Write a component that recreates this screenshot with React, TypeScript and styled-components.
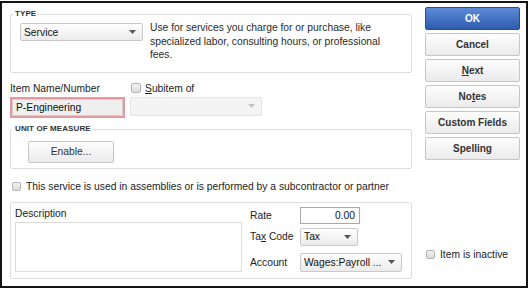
import React from "react";
import styled, { createGlobalStyle } from "styled-components";

const GlobalStyle = createGlobalStyle`
  html, body { margin: 0; padding: 0; background: #fff; }
  body {
    font-family: "Liberation Sans", Arial, sans-serif;
    font-size: 10.3px;
    color: #222;
  }
  * { box-sizing: border-box; }
`;

const Dialog = styled.div`
  width: 528px;
  height: 287px;
  margin: 1px 0 0 0;
  border: 2px solid #141414;
  background: #fff;
  display: flex;
  padding: 0 6px 0 8px;
`;

const LeftCol = styled.div`
  width: 402px;
  display: flex;
  flex-direction: column;
  padding-top: 11px;
`;

const RightCol = styled.div`
  width: 95px;
  margin-left: 13px;
  display: flex;
  flex-direction: column;
  gap: 3px;
  padding: 4px 0 25px;
`;

const Group = styled.div<{ $mt?: number }>`
  border: 1px solid #dedede;
  border-radius: 2px;
  margin-top: ${(p) => p.$mt ?? 0}px;
`;

const GroupTitle = styled.div`
  margin: -6px 0 0 2px;
  padding: 0 2px;
  width: fit-content;
  background: #fff;
  font-weight: bold;
  font-size: 8px;
  line-height: 10px;
  color: #333;
  letter-spacing: 0.1px;
`;

const TypeRow = styled.div`
  display: flex;
  align-items: flex-start;
  gap: 7px;
  padding: 4px 8px 10px 9px;
`;

const Desc = styled.div`
  width: 240px;
  line-height: 13.5px;
  margin-top: -2px;
  color: #2a2a2a;
`;

const SelectBox = styled.div<{ $w: number; $h?: number; $disabled?: boolean }>`
  width: ${(p) => p.$w}px;
  height: ${(p) => p.$h ?? 18}px;
  flex: none;
  display: flex;
  align-items: center;
  padding: 0 6px 0 3px;
  border: 1px solid ${(p) => (p.$disabled ? "#e4e4e4" : "#c9c9c9")};
  border-radius: 2px;
  background: ${(p) =>
    p.$disabled ? "#f4f4f4" : "linear-gradient(#fefefe, #ebebeb)"};
  color: #111;
`;

const SelectText = styled.span`
  flex: 1;
  white-space: nowrap;
  overflow: hidden;
`;

const Arrow = ({ light }: { light?: boolean }) => (
  <svg width="7" height="4" viewBox="0 0 7 4">
    <path d="M0 0 H7 L3.5 4 Z" fill={light ? "#c4c4c4" : "#555"} />
  </svg>
);

const Select = ({
  w,
  h,
  text,
  disabled,
}: {
  w: number;
  h?: number;
  text?: string;
  disabled?: boolean;
}) => (
  <SelectBox $w={w} $h={h} $disabled={disabled}>
    <SelectText>{text}</SelectText>
    <Arrow light={disabled} />
  </SelectBox>
);

const NameRow = styled.div`
  display: flex;
  gap: 5px;
  margin-top: 9px;
`;

const NameCol = styled.div<{ $w: number }>`
  width: ${(p) => p.$w}px;
  display: flex;
  flex-direction: column;
`;

const Label = styled.div`
  line-height: 13px;
  color: #222;
  white-space: nowrap;
`;

const CheckLabel = styled.label`
  display: flex;
  align-items: center;
  gap: 4px;
  height: 13px;
  line-height: 13px;
  padding-left: 1px;
  color: #222;
  white-space: nowrap;
`;

const Check = styled.span<{ $size?: number }>`
  width: ${(p) => p.$size ?? 10}px;
  height: ${(p) => p.$size ?? 10}px;
  flex: none;
  border: 1px solid #b4b4b4;
  border-radius: 2px;
  background: linear-gradient(#f2f2f2, #dcdcdc);
`;

const HighlightInput = styled.div`
  margin-top: 2px;
  height: 21px;
  width: 115px;
  border: 2px solid #e8979b;
`;

const InputInner = styled.div`
  height: 100%;
  border: 1px solid #cfcfcf;
  background: #efefef;
  padding-left: 3px;
  display: flex;
  align-items: center;
  color: #111;
`;

const SubSelectWrap = styled.div`
  margin-top: 2px;
`;

const UnitBody = styled.div`
  padding: 7px 0 5px 17px;
`;

const Btn = styled.div<{ $primary?: boolean; $w?: number }>`
  width: ${(p) => (p.$w ? `${p.$w}px` : "100%")};
  height: ${(p) => (p.$w ? 22 : 23)}px;
  display: flex;
  align-items: center;
  justify-content: center;
  border: 1px solid ${(p) => (p.$primary ? "#2a4c8c" : "#c6c6c6")};
  border-radius: 2px;
  background: ${(p) =>
    p.$primary
      ? "linear-gradient(#5b8bd8, #2f5cad)"
      : "linear-gradient(#fdfdfd, #ebebeb)"};
  color: ${(p) => (p.$primary ? "#fff" : "#333")};
  font-weight: ${(p) => (p.$w ? "normal" : "bold")};
  font-size: ${(p) => (p.$w ? 10.3 : 10)}px;
`;

const U = styled.span`
  text-decoration: underline;
`;

const AssemblyRow = styled.label`
  display: flex;
  align-items: center;
  gap: 5px;
  margin-top: 11px;
  padding-left: 2px;
  height: 14px;
  color: #222;
  white-space: nowrap;
`;

const BottomBody = styled.div`
  display: flex;
  padding: 4px 0 6px 4px;
`;

const DescCol = styled.div`
  display: flex;
  flex-direction: column;
`;

const TextArea = styled.div`
  margin-top: 2px;
  width: 227px;
  height: 50px;
  border: 1px solid #dcdcdc;
  background: #fff;
`;

const Fields = styled.div`
  margin-left: 8px;
  display: flex;
  flex-direction: column;
`;

const FieldRow = styled.div<{ $mt?: number }>`
  display: grid;
  grid-template-columns: 50px auto;
  align-items: center;
  margin-top: ${(p) => p.$mt ?? 0}px;
`;

const NumInput = styled.div`
  width: 60px;
  height: 17px;
  border: 1px solid #a9a9a9;
  background: #fff;
  text-align: right;
  padding-right: 4px;
  line-height: 15px;
  color: #111;
`;

const InactiveRow = styled.label`
  margin-top: auto;
  display: flex;
  align-items: center;
  gap: 5px;
  padding-left: 1px;
  height: 14px;
  color: #222;
`;

export default function App() {
  return (
    <>
      <GlobalStyle />
      <Dialog>
        <LeftCol>
          <Group>
            <GroupTitle>TYPE</GroupTitle>
            <TypeRow>
              <Select w={123} text="Service" />
              <Desc>
                Use for services you charge for or purchase, like specialized
                labor, consulting hours, or professional fees.
              </Desc>
            </TypeRow>
          </Group>

          <NameRow>
            <NameCol $w={115}>
              <Label>Item Name/Number</Label>
              <HighlightInput>
                <InputInner>P-Engineering</InputInner>
              </HighlightInput>
            </NameCol>
            <NameCol $w={132}>
              <CheckLabel>
                <Check />
                <span>
                  <U>S</U>ubitem of
                </span>
              </CheckLabel>
              <SubSelectWrap>
                <Select w={132} h={19} disabled />
              </SubSelectWrap>
            </NameCol>
          </NameRow>

          <Group $mt={11}>
            <GroupTitle>UNIT OF MEASURE</GroupTitle>
            <UnitBody>
              <Btn $w={86}>Enable...</Btn>
            </UnitBody>
          </Group>

          <AssemblyRow>
            <Check $size={9} />
            <span>
              This service is used in assemblies or is performed by a
              subcontractor or partner
            </span>
          </AssemblyRow>

          <Group $mt={8}>
            <BottomBody>
              <DescCol>
                <Label>Description</Label>
                <TextArea />
              </DescCol>
              <Fields>
                <FieldRow>
                  <Label>Rate</Label>
                  <NumInput>0.00</NumInput>
                </FieldRow>
                <FieldRow $mt={4}>
                  <Label>
                    Ta<U>x</U> Code
                  </Label>
                  <Select w={58} text="Tax" />
                </FieldRow>
                <FieldRow $mt={7}>
                  <Label>Account</Label>
                  <Select w={102} h={19} text="Wages:Payroll ..." />
                </FieldRow>
              </Fields>
            </BottomBody>
          </Group>
        </LeftCol>

        <RightCol>
          <Btn $primary>OK</Btn>
          <Btn>Cancel</Btn>
          <Btn>
            <span>
              <U>N</U>ext
            </span>
          </Btn>
          <Btn>
            <span>
              No<U>t</U>es
            </span>
          </Btn>
          <Btn>Custom Fields</Btn>
          <Btn>
            <span>
              Spellin<U>g</U>
            </span>
          </Btn>
          <InactiveRow>
            <Check $size={9} />
            <span>Item is inactive</span>
          </InactiveRow>
        </RightCol>
      </Dialog>
    </>
  );
}
